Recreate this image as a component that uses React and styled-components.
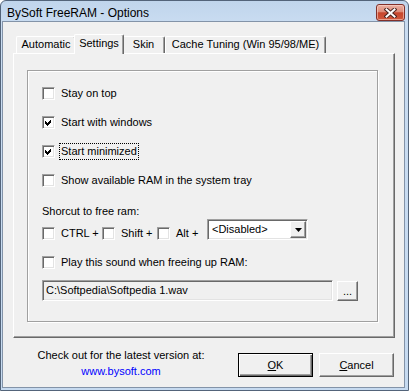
import React from "react";
import styled, { createGlobalStyle } from "styled-components";

const Global = createGlobalStyle`
  html, body { margin: 0; padding: 0; background: #ffffff; }
  body { font-family: "Liberation Sans", Arial, sans-serif; }
  * { box-sizing: border-box; }
`;

const Window = styled.div`
  width: 409px;
  height: 391px;
  border: 1px solid #53647a;
  border-radius: 6px 6px 0 0;
  background: linear-gradient(180deg, #c0d5ec 0px, #c9dcf1 22px, #c6daf0 100%);
  padding: 0 3px 2px 1px;
  display: flex;
  flex-direction: column;
`;

const TitleBar = styled.div`
  height: 20px;
  display: flex;
  align-items: flex-start;
  justify-content: space-between;
  padding-left: 5px;
`;

const Title = styled.span`
  font-family: "Liberation Sans", Arial, sans-serif;
  font-size: 12px;
  line-height: 16px;
  margin-top: 4px;
  color: #000;
`;

const CloseButton = styled.div`
  width: 29px;
  height: 17px;
  margin-top: 3px;
  border: 1px solid #82302a;
  border-radius: 3px;
  background: linear-gradient(180deg, #eab1a4 0%, #de8c79 45%, #c7462d 52%, #d0593d 100%);
  box-shadow: inset 0 0 0 1px rgba(255, 220, 210, 0.55);
  display: flex;
  align-items: center;
  justify-content: center;
`;

const Client = styled.div`
  flex: 1;
  background: #f0f0f0;
  border: 1px solid #8393a8;
  padding: 12px 9px 0 10px;
  display: flex;
  flex-direction: column;
  font-size: 11px;
  color: #000;
`;

const TabControl = styled.div`
  width: 382px;
  display: flex;
  flex-direction: column;
`;

const TabRow = styled.div`
  height: 19px;
  display: flex;
  align-items: flex-end;
  padding-left: 3px;
`;

const Tab = styled.div`
  position: relative;
  width: ${(p) => (p.$active ? p.$w + 4 : p.$w)}px;
  height: ${(p) => (p.$active ? 20 : 17)}px;
  margin: 0 ${(p) => (p.$active ? -2 : 0)}px ${(p) => (p.$active ? -1 : 0)}px;
  z-index: ${(p) => (p.$active ? 2 : 1)};
  background: #f0f0f0;
  border: 1px solid #ffffff;
  border-bottom: none;
  border-right-color: #696969;
  border-radius: 2px 2px 0 0;
  box-shadow: inset -1px 0 0 #a0a0a0;
  padding-top: ${(p) => (p.$active ? 2 : 1)}px;
  font-size: 11px;
  line-height: 13px;
  text-align: center;
  white-space: nowrap;
`;

const Panel = styled.div`
  height: 285px;
  background: #f0f0f0;
  border-top: 1px solid #ffffff;
  border-left: 1px solid #ffffff;
  border-right: 1px solid #696969;
  border-bottom: 1px solid #696969;
  box-shadow: inset -1px -1px 0 #a0a0a0;
  padding: 16px 16px 15px 13px;
  display: flex;
`;

const Frame = styled.div`
  flex: 1;
  border: 1px solid #a0a0a0;
  box-shadow: inset 1px 1px 0 #ffffff, 1px 1px 0 #ffffff;
  padding: 14px 0 0 14px;
  display: flex;
  flex-direction: column;
`;

const CheckRow = styled.div`
  height: 17px;
  display: flex;
  align-items: center;
  gap: 4px;
  margin-top: ${(p) => p.$mt || 0}px;
  width: ${(p) => (p.$w ? `${p.$w}px` : "auto")};
  flex: none;
`;

const Box = styled.div`
  width: 13px;
  height: 13px;
  flex: none;
  background: #ffffff;
  border-top: 1px solid #a0a0a0;
  border-left: 1px solid #a0a0a0;
  border-bottom: 1px solid #ffffff;
  border-right: 1px solid #ffffff;
  box-shadow: inset 1px 1px 0 #696969, inset -1px -1px 0 #e3e3e3;
  display: flex;
`;

const Label = styled.span`
  line-height: 13px;
  padding: 1px 1px;
  border: 1px dotted ${(p) => (p.$focus ? "#000" : "transparent")};
  white-space: nowrap;
`;

const Text = styled.div`
  line-height: 13px;
  margin-top: ${(p) => p.$mt || 0}px;
`;

const Row = styled.div`
  display: flex;
  align-items: ${(p) => p.$align || "flex-start"};
  margin-top: ${(p) => p.$mt || 0}px;
`;

const CheckGroup = styled.div`
  display: flex;
  margin-top: 6px;
`;

const Select = styled.div`
  width: 101px;
  height: 21px;
  background: #ffffff;
  border-top: 1px solid #a0a0a0;
  border-left: 1px solid #a0a0a0;
  border-bottom: 1px solid #ffffff;
  border-right: 1px solid #ffffff;
  box-shadow: inset 1px 1px 0 #696969, inset -1px -1px 0 #e3e3e3;
  display: flex;
  align-items: center;
  justify-content: space-between;
  padding: 0 1px 0 4px;
  line-height: 13px;
`;

const ArrowButton = styled.div`
  width: 16px;
  height: 17px;
  background: #f0f0f0;
  border-top: 1px solid #ffffff;
  border-left: 1px solid #ffffff;
  border-right: 1px solid #696969;
  border-bottom: 1px solid #696969;
  box-shadow: inset -1px -1px 0 #a0a0a0;
  display: flex;
  align-items: center;
  justify-content: center;
`;

const Field = styled.div`
  width: 291px;
  height: 21px;
  background: #f0f0f0;
  border-top: 1px solid #a0a0a0;
  border-left: 1px solid #a0a0a0;
  border-bottom: 1px solid #ffffff;
  border-right: 1px solid #ffffff;
  box-shadow: inset 1px 1px 0 #696969, inset -1px -1px 0 #e3e3e3;
  display: flex;
  align-items: center;
  padding-left: 3px;
  line-height: 13px;
  white-space: nowrap;
`;

const Button = styled.div`
  width: ${(p) => p.$w}px;
  height: ${(p) => p.$h}px;
  margin-left: ${(p) => p.$ml || 0}px;
  background: #f0f0f0;
  border-top: 1px solid ${(p) => (p.$default ? "#000" : "#ffffff")};
  border-left: 1px solid ${(p) => (p.$default ? "#000" : "#ffffff")};
  border-right: 1px solid ${(p) => (p.$default ? "#000" : "#696969")};
  border-bottom: 1px solid ${(p) => (p.$default ? "#000" : "#696969")};
  box-shadow: ${(p) =>
    p.$default
      ? "inset 1px 1px 0 #ffffff, inset -1px -1px 0 #696969, inset -2px -2px 0 #a0a0a0"
      : "inset -1px -1px 0 #a0a0a0"};
  display: flex;
  align-items: center;
  justify-content: center;
  font-size: 11px;
  line-height: 13px;
  flex: none;
`;

const Footer = styled.div`
  display: flex;
  align-items: flex-start;
  padding-right: 1px;
`;

const Info = styled.div`
  width: 216px;
  margin-top: 9px;
  text-align: center;
  line-height: 16px;
`;

const Link = styled.div`
  color: #0000ff;
`;

const Buttons = styled.div`
  margin-left: auto;
  margin-top: 15px;
  display: flex;
  gap: 6px;
`;

const Check = ({ checked }) => (
  <Box>
    {checked && (
      <svg width="11" height="11" viewBox="0 0 11 11" shapeRendering="crispEdges">
        <polygon points="2,4 4,6 8,2 8,5 4,9 2,7" fill="#000" />
      </svg>
    )}
  </Box>
);

const CheckItem = ({ checked, children, focus, mt, w }) => (
  <CheckRow $mt={mt} $w={w}>
    <Check checked={checked} />
    <Label $focus={focus}>{children}</Label>
  </CheckRow>
);

export default function App() {
  return (
    <>
      <Global />
      <Window>
        <TitleBar>
          <Title>BySoft FreeRAM - Options</Title>
          <CloseButton>
            <svg width="13" height="10" viewBox="0 0 13 10">
              <path d="M2.5 1.5 L10.5 8.5 M10.5 1.5 L2.5 8.5" stroke="#4b2520" strokeWidth="4" strokeLinecap="square" />
              <path d="M2.5 1.5 L10.5 8.5 M10.5 1.5 L2.5 8.5" stroke="#ffffff" strokeWidth="2" strokeLinecap="square" />
            </svg>
          </CloseButton>
        </TitleBar>
        <Client>
          <TabControl>
            <TabRow>
              <Tab $w={60}>Automatic</Tab>
              <Tab $w={46} $active>Settings</Tab>
              <Tab $w={43}>Skin</Tab>
              <Tab $w={161}>Cache Tuning (Win 95/98/ME)</Tab>
            </TabRow>
            <Panel>
              <Frame>
                <CheckItem>Stay on top</CheckItem>
                <CheckItem checked mt={12}>Start with windows</CheckItem>
                <CheckItem checked focus mt={12}>Start minimized</CheckItem>
                <CheckItem mt={12}>Show available RAM in the system tray</CheckItem>
                <Text $mt={16}>Shorcut to free ram:</Text>
                <Row $mt={1}>
                  <CheckGroup>
                    <CheckItem w={60}>CTRL +</CheckItem>
                    <CheckItem w={55}>Shift +</CheckItem>
                    <CheckItem w={50}>Alt +</CheckItem>
                  </CheckGroup>
                  <Select>
                    <span>&lt;Disabled&gt;</span>
                    <ArrowButton>
                      <svg width="7" height="4" viewBox="0 0 7 4">
                        <polygon points="0,0 7,0 3.5,4" fill="#000" />
                      </svg>
                    </ArrowButton>
                  </Select>
                </Row>
                <CheckItem mt={12}>Play this sound when freeing up RAM:</CheckItem>
                <Row $mt={9} $align="flex-end">
                  <Field>{"C:\\Softpedia\\Softpedia 1.wav"}</Field>
                  <Button $w={21} $h={20} $ml={4}>...</Button>
                </Row>
              </Frame>
            </Panel>
          </TabControl>
          <Footer>
            <Info>
              <div>Check out for the latest version at:</div>
              <Link>www.bysoft.com</Link>
            </Info>
            <Buttons>
              <Button $w={75} $h={24} $default>
                <span><u>O</u>K</span>
              </Button>
              <Button $w={75} $h={24}>
                <span><u>C</u>ancel</span>
              </Button>
            </Buttons>
          </Footer>
        </Client>
      </Window>
    </>
  );
}
